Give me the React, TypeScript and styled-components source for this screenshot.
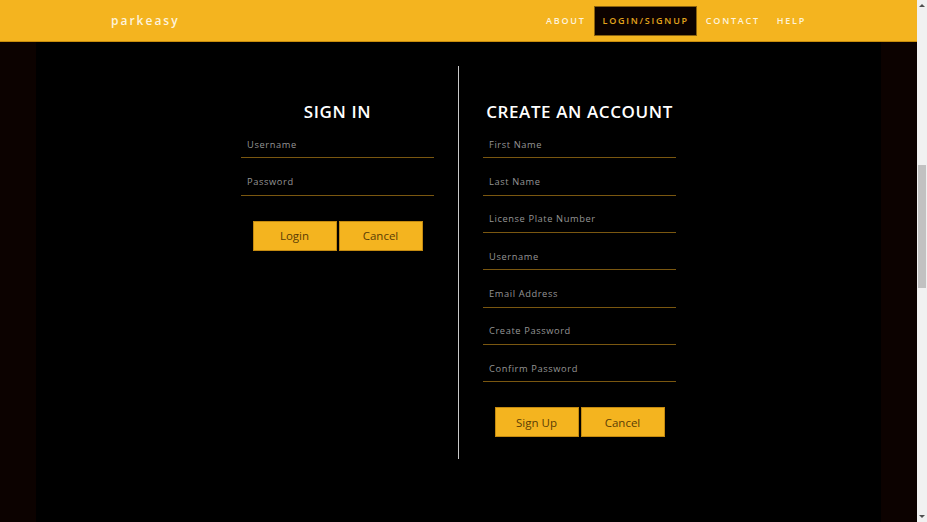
import styled, { createGlobalStyle } from "styled-components";

const GlobalStyle = createGlobalStyle`
  html, body {
    margin: 0;
    padding: 0;
    background: #0c0200;
    font-family: "Open Sans", "Liberation Sans", sans-serif;
  }
`;

const Frame = styled.div`
  margin-right: 10px;
  min-height: 100vh;
  background: #0c0200;
`;

const NavBar = styled.header`
  position: fixed;
  top: 0;
  left: 0;
  right: 10px;
  z-index: 10;
  height: 41px;
  background: #f4b41f;
  border-bottom: 1px solid #c98d0c;
  display: flex;
  align-items: center;
  justify-content: space-between;
  padding: 0 103px 0 111px;
`;

const Logo = styled.span`
  color: #fdf3dc;
  font-size: 12px;
  font-weight: 600;
  letter-spacing: 2px;
`;

const NavList = styled.nav`
  display: flex;
  align-items: center;
`;

const NavLink = styled.a<{ $active?: boolean }>`
  display: flex;
  align-items: center;
  height: 28px;
  padding: 0 7px 0 8px;
  font-size: 9px;
  font-weight: 600;
  letter-spacing: 1.75px;
  text-decoration: none;
  color: ${({ $active }) => ($active ? "#e3a51c" : "#fdf3dc")};
  background: ${({ $active }) => ($active ? "#0c0200" : "transparent")};
  border: 1px solid ${({ $active }) => ($active ? "#8a6210" : "transparent")};
`;

const Scrollbar = styled.div`
  position: fixed;
  top: 0;
  right: 0;
  bottom: 0;
  width: 10px;
  background: #f1f1f1;
  z-index: 20;
`;

const ScrollThumb = styled.div`
  position: absolute;
  top: 165px;
  left: 1px;
  width: 8px;
  height: 123px;
  background: #c1c1c1;
`;

const ScrollArrow = styled.div<{ $down?: boolean }>`
  position: absolute;
  left: 2px;
  ${({ $down }) => ($down ? "bottom: 4px;" : "top: 4px;")}
  width: 0;
  height: 0;
  border-left: 3px solid transparent;
  border-right: 3px solid transparent;
  ${({ $down }) =>
    $down ? "border-top: 3px solid #505050;" : "border-bottom: 3px solid #505050;"}
`;

const Page = styled.main`
  width: 845px;
  min-height: 100vh;
  margin: 0 auto;
  background: #000;
`;

const FormSection = styled.section`
  display: flex;
  justify-content: center;
  padding-top: 66px;
`;

const Column = styled.div<{ $divider?: boolean }>`
  width: 193px;
  padding: 35px ${({ $divider }) => ($divider ? "0 22px 24px" : "24px 0 0")};
  border-left: ${({ $divider }) => ($divider ? "1px solid #c9c9c9" : "none")};
`;

const Heading = styled.h2`
  margin: 0;
  height: 20px;
  display: flex;
  justify-content: center;
  align-items: center;
  white-space: nowrap;
  color: #fff;
  font-size: 17px;
  font-weight: 600;
  letter-spacing: 0.6px;
`;

const Field = styled.input`
  display: block;
  box-sizing: border-box;
  width: 100%;
  height: 37.33px;
  padding: 10px 6px 0;
  background: transparent;
  border: none;
  border-bottom: 1px solid #7a5710;
  color: #ddd;
  font-family: inherit;
  font-size: 9.3px;
  letter-spacing: 0.6px;
  outline: none;

  &::placeholder {
    color: #959595;
  }
`;

const Buttons = styled.div`
  display: flex;
  justify-content: center;
  gap: 2px;
  margin-top: 25px;
`;

const Button = styled.button`
  width: 84px;
  height: 30px;
  background: #f4b41f;
  border: 1px solid #c48a10;
  color: #5a3d05;
  font-family: inherit;
  font-size: 11.5px;
  cursor: pointer;
`;

const signInFields = ["Username", "Password"];
const signUpFields = [
  "First Name",
  "Last Name",
  "License Plate Number",
  "Username",
  "Email Address",
  "Create Password",
  "Confirm Password",
];

export default function App() {
  return (
    <>
      <GlobalStyle />
      <NavBar>
        <Logo>parkeasy</Logo>
        <NavList>
          <NavLink>ABOUT</NavLink>
          <NavLink $active>LOGIN/SIGNUP</NavLink>
          <NavLink>CONTACT</NavLink>
          <NavLink>HELP</NavLink>
        </NavList>
      </NavBar>
      <Frame>
        <Page>
          <FormSection>
            <Column>
              <Heading>SIGN IN</Heading>
              {signInFields.map((f) => (
                <Field key={f} placeholder={f} />
              ))}
              <Buttons>
                <Button>Login</Button>
                <Button>Cancel</Button>
              </Buttons>
            </Column>
            <Column $divider>
              <Heading>CREATE AN ACCOUNT</Heading>
              {signUpFields.map((f) => (
                <Field key={f} placeholder={f} />
              ))}
              <Buttons>
                <Button>Sign Up</Button>
                <Button>Cancel</Button>
              </Buttons>
            </Column>
          </FormSection>
        </Page>
      </Frame>
      <Scrollbar>
        <ScrollArrow />
        <ScrollThumb />
        <ScrollArrow $down />
      </Scrollbar>
    </>
  );
}
